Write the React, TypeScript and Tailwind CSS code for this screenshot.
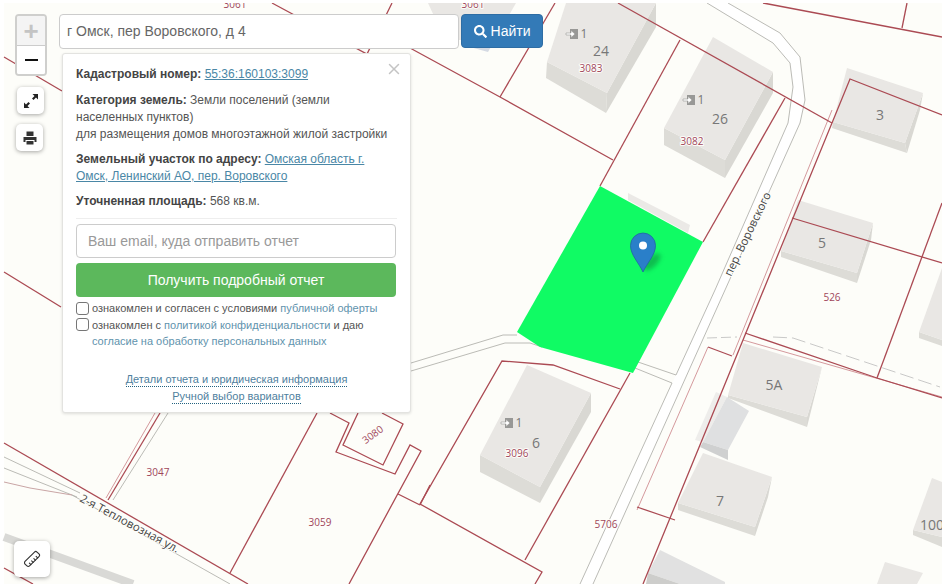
import { FaSearch } from "react-icons/fa";
import { Ruler, X } from "lucide-react";

const RED = "#ab4a53";
const ROAD = "#b3b3ae";

// [top face, front face, side face]
const BUILDINGS: string[][] = [
  ["566,3 656,3 607,93 547,62", "547,62 546,78 606,113 607,93", "607,93 606,113 656,27 656,3"],
  ["713,37 773,72 725,160 664,128", "664,128 664,145 725,178 725,160", "725,160 725,178 773,93 773,72"],
  ["847,68 923,93 905,143 833,122", "833,122 832,128 907,153 905,143", "905,143 907,153 920,110 923,93"],
  ["798,200 873,223 857,273 781,251", "781,251 781,257 857,283 857,273", "857,273 857,283 871,240 873,223"],
  ["527,365 591,393 540,487 480,455", "480,455 480,472 540,503 540,487", "540,487 540,503 591,412 591,393"],
  ["743,343 822,367 807,417 728,395", "728,395 728,398 807,427 807,417", "807,417 807,427 817,387 822,367"],
  ["703,453 772,477 755,527 678,503", "678,503 678,510 755,536 755,527", "755,527 755,536 768,497 772,477"],
  ["932,478 942,482 942,537 913,530", "913,530 913,535 942,547 942,537", ""],
  ["942,268 919,332 942,340", "919,332 919,338 942,346 942,340", ""],
  ["885,562 923,573 917,584 877,584", "", ""],
  ["428,3 516,3 495,40 445,40", "", ""],
];

const RED_LINES = [
  "4,57 62,91",
  "4,272 61,307",
  "272,3 367,54 392,3",
  "410,48 500,97 613,160",
  "500,97 555,3",
  "618,3 832,123",
  "680,40 600,186",
  "763,3 942,37",
  "907,3 902,28",
  "785,98 703,242",
  "942,115 850,79 643,584",
  "792,218 942,263",
  "942,203 877,378",
  "745,333 877,378 942,398",
  "708,347 732,356",
  "637,507 675,520",
  "620,389 553,365 502,361 420,504 542,572 535,584",
  "630,373 525,560",
  "4,443 248,584",
  "160,413 108,500",
  "317,413 230,573",
  "358,413 343,445 383,465 403,424 382,413",
  "330,413 349,423 336,452 395,474 410,445 421,451 349,584",
  "398,494 420,505",
  "430,485 420,505",
  "4,568 33,584",
];

const THIN_RED = [
  "832,110 733,355",
  "743,340 942,397",
  "708,347 637,510",
  "155,413 106,498",
];

const ROADS = [
  "707,3 773,43 790,63 793,87 788,123 715,290 676,375",
  "728,3 780,33 800,57 805,100 800,123 593,584",
  "672,383 580,584",
  "638,362 676,375",
  "635,368 672,383",
  "411,363 503,335 517,335",
  "411,371 505,343 530,343 542,347",
  "168,413 113,500",
  "4,457 80,493",
  "4,468 77,497",
  "72,495 230,584",
];

const NUMBERS: [string, number, number][] = [
  ["3083", 591, 68],
  ["3082", 692, 141],
  ["526", 832, 297],
  ["3096", 517, 453],
  ["5706", 606, 524],
  ["3047", 158, 472],
  ["3059", 320, 522],
  ["3061", 235, 4],
  ["3061", 473, 4],
];

const HOUSES: [string, number, number][] = [
  ["24", 601, 51],
  ["26", 720, 119],
  ["3", 880, 115],
  ["5", 822, 243],
  ["5A", 774, 385],
  ["6", 536, 443],
  ["7", 720, 501],
  ["100", 932, 525],
];

function Door({ x, y }: { x: number; y: number }) {
  return (
    <g>
      <rect x={x - 2} y={y - 5} width={8} height={10} fill="#989896" />
      <path d={`M${x - 6} ${y - 1}h5v-2.500l4 3.500-4 3.500v-2.500h-5z`} fill="#fff" stroke="#989896" strokeWidth="0.6" />
      <text x={x + 12} y={y + 4} fontSize="12" fill="#777" textAnchor="middle" fontFamily="Open Sans, sans-serif">
        1
      </text>
    </g>
  );
}

function MapLayer() {
  return (
    <svg className="absolute inset-0" width="942" height="584" viewBox="0 0 942 584">
      <defs>
        <filter id="pin-shadow" x="-50%" y="-50%" width="200%" height="200%">
          <feGaussianBlur stdDeviation="2" />
        </filter>
      </defs>
      <rect x="4" y="0" width="938" height="584" fill="#fdfdf9" />

      <path d="M4 537L133 584" stroke="#d9d9d6" strokeWidth="8" fill="none" />
      <polygon points="707,3 728,3 780,33 800,57 805,100 800,123 593,584 580,584 715,290 788,123 793,87 790,63 773,43" fill="#fff" />

      {/* bits of the neighbours that are not regular blocks */}
      <polygon points="628,193 690,225 688,233 628,200" fill="#ebe9e6" />
      <polygon points="716,392 695,440 703,442 727,397" fill="#eeedeb" />
      <polygon points="727,397 749,411 728,450 703,442" fill="#dfe0e1" />
      <polygon points="703,442 728,450 728,460 700,447" fill="#cfd0d0" />
      <polygon points="660,550 725,582 725,584 680,584 648,573" fill="#e1e1e1" />
      <polygon points="648,573 680,584 646,584" fill="#cdcdcb" />
      <polygon points="470,40 495,40 488,52 470,47" fill="#d5dae3" />

      {BUILDINGS.map(([top, front, side], i) => (
        <g key={i}>
          {front && <polygon points={front} fill="#dddcd7" />}
          {side && <polygon points={side} fill="#d9d8d3" />}
          <polygon points={top} fill="#e9e7e4" />
        </g>
      ))}

      {ROADS.map((points) => (
        <polyline key={points} points={points} fill="none" stroke={ROAD} strokeWidth="0.9" />
      ))}
      <polyline points="4,482 30,488 72,495" fill="none" stroke="#c9a5a5" strokeWidth="1" />
      <polyline points="707,338 737,337" fill="none" stroke="#bbb" strokeWidth="0.8" strokeDasharray="10 4" />
      <polyline points="773,337 793,338 940,387" fill="none" stroke="#bbb" strokeWidth="0.8" strokeDasharray="14 5" />

      {THIN_RED.map((points) => (
        <polyline key={points} points={points} fill="none" stroke="#cf8d92" strokeWidth="0.9" />
      ))}
      {RED_LINES.map((points) => (
        <polyline key={points} points={points} fill="none" stroke={RED} strokeWidth="1.3" />
      ))}

      <polygon points="600,186 703,242 633,373 540,347 517,332" fill="#10fb64" />

      <Door x={572} y={34} />
      <Door x={689} y={100} />
      <Door x={507} y={423} />

      <g fontFamily="Open Sans, sans-serif" textAnchor="middle">
        {HOUSES.map(([label, x, y]) => (
          <text key={label} x={x} y={y + 5} fontSize="14" fill="#777">
            {label}
          </text>
        ))}
        {NUMBERS.map(([label, x, y]) => (
          <text
            key={label + x}
            x={x}
            y={y + 3.5}
            fontSize="10"
            fill="#a0465a"
            stroke="#fdfdf9"
            strokeWidth="2"
            paintOrder="stroke"
          >
            {label}
          </text>
        ))}
        <text x="373" y="438" fontSize="10" fill="#a0465a" transform="rotate(-36 373 435)">
          3080
        </text>
      </g>

      <g fontFamily="Open Sans, sans-serif" fontSize="11.500" fill="#444" stroke="#fdfdf9" strokeWidth="2" paintOrder="stroke">
        <text x="79" y="501" transform="rotate(28 79 501)">
          2-я Тепловозная ул.
        </text>
        <text x="731" y="277" transform="rotate(-64 731 277)">
          пер. Воровского
        </text>
      </g>

      {/* marker */}
      <ellipse
        cx="652"
        cy="262"
        rx="11"
        ry="5"
        fill="#07803a"
        opacity="0.5"
        filter="url(#pin-shadow)"
        transform="rotate(-45 652 262)"
      />
      <path
        d="M643 272C639 263 630.500 255 630.500 245.500A12.500 12.500 0 0 1 655.500 245.500C655.500 255 647 263 643 272Z"
        fill="#2a7fc9"
        stroke="#22669f"
        strokeWidth="0.8"
      />
      <circle cx="643" cy="245.500" r="4" fill="#fff" />

      {/* the map itself stops a few pixels below the page top */}
      <rect width="942" height="3" fill="#fff" />
    </svg>
  );
}

function MapButton({ className, children }: { className: string; children: React.ReactNode }) {
  return (
    <div
      className={
        "absolute flex items-center justify-center rounded-[5px] bg-white text-[#333] shadow-[0_1px_4px_rgba(0,0,0,0.35)] " +
        className
      }
    >
      {children}
    </div>
  );
}

function ExpandIcon() {
  return (
    <svg width="16" height="16" viewBox="0 0 16 16" fill="#222">
      <path d="M15 1v5.500l-2-2-2.500 2.500-1.500-1.500L11.500 3l-2-2z" />
      <path d="M1 15V9.500l2 2L5.500 9 7 10.500 4.500 13l2 2z" />
    </svg>
  );
}

function PrintIcon() {
  return (
    <svg width="14" height="14" viewBox="0 0 14 14" fill="#333">
      <path d="M3.500 0.500h7V5h-7z" />
      <path d="M0.500 6h13v5h-2V9h-9v2h-2z" />
      <path d="M3.500 10h7v3.500h-7z" />
    </svg>
  );
}

function Panel() {
  return (
    <div className="absolute left-[62px] top-[53px] h-[360px] w-[349px] rounded-[3px] border border-[#e3e3e0] bg-white px-[13px] pt-[12px] text-[12px] leading-[17px] text-[#555] shadow-[0_1px_3px_rgba(0,0,0,0.12)]">
      <X className="absolute right-[7px] top-[6px] size-[18px] text-[#c4c4c4]" strokeWidth={2} />
      <p>
        <b className="text-[#444]">Кадастровый номер:</b>{" "}
        <a className="text-[#4a87a6] underline">55:36:160103:3099</a>
      </p>
      <p className="mt-[9px]">
        <b className="text-[#444]">Категория земель:</b> Земли поселений (земли
        <br />
        населенных пунктов)
        <br />
        для размещения домов многоэтажной жилой застройки
      </p>
      <p className="mt-[8px]">
        <b className="text-[#444]">Земельный участок по адресу:</b>{" "}
        <a className="text-[#4a87a6] underline">
          Омская область г.
          <br />
          Омск, Ленинский АО, пер. Воровского
        </a>
      </p>
      <p className="mt-[8px]">
        <b className="text-[#444]">Уточненная площадь:</b> 568 кв.м.
      </p>
      <div className="mt-[8px] h-px bg-[#eeeeee]" />
      <input
        readOnly
        placeholder="Ваш email, куда отправить отчет"
        className="mt-[5px] block h-[34px] w-[320px] rounded-[4px] border border-[#ccc] px-[11px] text-[14px] outline-none placeholder:text-[#999]"
      />
      <button className="mt-[5px] block h-[34px] w-[320px] rounded-[4px] bg-[#5cb85c] text-center text-[14px] text-white">
        Получить подробный отчет
      </button>
      <div className="mt-[3px] text-[11px] leading-[16.500px] text-[#555]">
        <label className="flex items-center">
          <span className="mr-[3px] size-[13px] shrink-0 rounded-[3px] border border-[#767676] bg-white" />
          <span>
            ознакомлен и согласен с условиями <a className="text-[#5f93ad]">публичной оферты</a>
          </span>
        </label>
        <label className="flex items-center">
          <span className="mr-[3px] size-[13px] shrink-0 rounded-[3px] border border-[#767676] bg-white" />
          <span>
            ознакомлен с <a className="text-[#5f93ad]">политикой конфиденциальности</a> и даю
          </span>
        </label>
        <a className="ml-[16px] block text-[#5f93ad]">согласие на обработку персональных данных</a>
      </div>
      <div className="mt-[22px] flex flex-col items-center text-[11px] text-[#4f7f9e]">
        <a className="border-b border-dotted border-[#23627f] leading-[14px]">Детали отчета и юридическая информация</a>
        <a className="mt-[2px] border-b border-dotted border-[#23627f] leading-[14px]">Ручной выбор вариантов</a>
      </div>
    </div>
  );
}

export default function App() {
  return (
    <div className="relative h-[584px] w-[942px] overflow-hidden bg-white font-['Liberation_Sans',Arial,sans-serif]">
      <MapLayer />

      <div className="absolute left-[15px] top-[14px] flex h-[62px] w-[32px] flex-col overflow-hidden rounded-[4px] border-2 border-[#cfcfcd] bg-white">
        <div className="flex h-[29px] items-center justify-center bg-[#f4f4f4] text-[26px] font-bold leading-none text-[#c4c4c4]">
          +
        </div>
        <div className="flex flex-1 items-center justify-center border-t border-[#ccc] bg-white">
          <span className="h-[2px] w-[13px] bg-[#111]" />
        </div>
      </div>
      <MapButton className="left-[17px] top-[87px] size-[27px]">
        <ExpandIcon />
      </MapButton>
      <MapButton className="left-[16px] top-[124px] size-[27px]">
        <PrintIcon />
      </MapButton>
      <MapButton className="left-[14px] top-[541px] size-[36px]">
        <Ruler className="size-[18px] rotate-90" strokeWidth={1.5} />
      </MapButton>

      <div className="absolute left-[59px] top-[14px] flex items-start gap-[2px]">
        <input
          readOnly
          value="г Омск, пер Воровского, д 4"
          className="h-[35px] w-[400px] rounded-[4px] border border-[#ccc] bg-white px-[7px] pb-[2px] text-[14px] text-[#666] outline-none"
        />
        <button className="flex h-[34px] w-[82px] items-center justify-center gap-[4px] rounded-[4px] border border-[#2e6da4] bg-[#337ab7] text-[14px] text-white">
          <FaSearch className="size-[13px]" />
          Найти
        </button>
      </div>

      <Panel />
    </div>
  );
}
